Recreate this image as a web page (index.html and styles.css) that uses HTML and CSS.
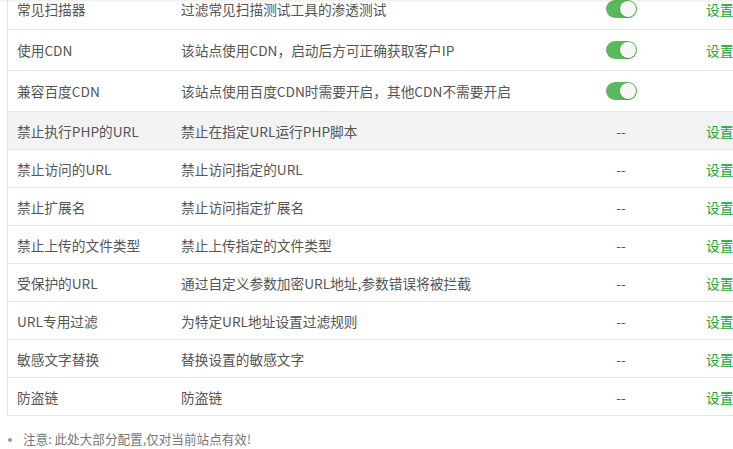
FILE: index.html
```
<!DOCTYPE html>
<html lang="zh-CN">
<head>
<meta charset="utf-8">
<link rel="stylesheet" href="styles.css">
</head>
<body>
<div class="topshade"></div>
<div class="page">
  <div class="table">
    <div class="row tall">
      <div class="c1">常见扫描器</div>
      <div class="c2">过滤常见扫描测试工具的渗透测试</div>
      <div class="c3"><span class="toggle"><span class="knob"></span></span></div>
      <div class="c4"><a class="set">设置</a></div>
    </div>
    <div class="row tall">
      <div class="c1">使用CDN</div>
      <div class="c2">该站点使用CDN，启动后方可正确获取客户IP</div>
      <div class="c3"><span class="toggle"><span class="knob"></span></span></div>
      <div class="c4"><a class="set">设置</a></div>
    </div>
    <div class="row tall">
      <div class="c1">兼容百度CDN</div>
      <div class="c2">该站点使用百度CDN时需要开启，其他CDN不需要开启</div>
      <div class="c3"><span class="toggle"><span class="knob"></span></span></div>
      <div class="c4"></div>
    </div>
    <div class="row hover">
      <div class="c1">禁止执行PHP的URL</div>
      <div class="c2">禁止在指定URL运行PHP脚本</div>
      <div class="c3">--</div>
      <div class="c4"><a class="set">设置</a></div>
    </div>
    <div class="row">
      <div class="c1">禁止访问的URL</div>
      <div class="c2">禁止访问指定的URL</div>
      <div class="c3">--</div>
      <div class="c4"><a class="set">设置</a></div>
    </div>
    <div class="row">
      <div class="c1">禁止扩展名</div>
      <div class="c2">禁止访问指定扩展名</div>
      <div class="c3">--</div>
      <div class="c4"><a class="set">设置</a></div>
    </div>
    <div class="row">
      <div class="c1">禁止上传的文件类型</div>
      <div class="c2">禁止上传指定的文件类型</div>
      <div class="c3">--</div>
      <div class="c4"><a class="set">设置</a></div>
    </div>
    <div class="row">
      <div class="c1">受保护的URL</div>
      <div class="c2">通过自定义参数加密URL地址,参数错误将被拦截</div>
      <div class="c3">--</div>
      <div class="c4"><a class="set">设置</a></div>
    </div>
    <div class="row">
      <div class="c1">URL专用过滤</div>
      <div class="c2">为特定URL地址设置过滤规则</div>
      <div class="c3">--</div>
      <div class="c4"><a class="set">设置</a></div>
    </div>
    <div class="row">
      <div class="c1">敏感文字替换</div>
      <div class="c2">替换设置的敏感文字</div>
      <div class="c3">--</div>
      <div class="c4"><a class="set">设置</a></div>
    </div>
    <div class="row">
      <div class="c1">防盗链</div>
      <div class="c2">防盗链</div>
      <div class="c3">--</div>
      <div class="c4"><a class="set">设置</a></div>
    </div>
  </div>
  <ul class="notes">
    <li>注意: 此处大部分配置,仅对当前站点有效!</li>
  </ul>
</div>
</body>
</html>
```
FILE: styles.css
```
html, body {
  margin: 0;
  padding: 0;
  background: #fff;
  overflow: hidden;
  width: 733px;
  height: 449px;
}
body {
  font-family: "Noto Sans CJK SC", "Liberation Sans", sans-serif;
  color: #555;
  position: relative;
}
.topshade {
  position: absolute;
  left: 0;
  top: 0;
  width: 100%;
  height: 3px;
  background: linear-gradient(to bottom, rgba(0,0,0,0.06), rgba(0,0,0,0));
  z-index: 2;
}
.page {
  padding-left: 7px;
  margin-top: -11px;
}
.table {
  width: 725px;
  overflow: hidden;
  border-left: 1px solid #e6e6e6;
  border-bottom: 1px solid #e6e6e6;
}
.row {
  display: grid;
  grid-template-columns: 164px 400px 98px 1fr;
  align-items: center;
  height: 37px;
  border-bottom: 1px solid #e6e6e6;
  font-size: 13.7px;
  overflow: hidden;
}
.row:last-child {
  border-bottom: none;
}
.row.tall {
  height: 40px;
}
.row.hover {
  background: #f3f3f3;
}
.c1, .c2 {
  padding-left: 9px;
  white-space: nowrap;
}
.c3 {
  display: flex;
  justify-content: center;
  color: #555;
}
.c4 {
  padding-left: 36px;
  white-space: nowrap;
  overflow: hidden;
}
.set {
  color: #20a53a;
  white-space: nowrap;
}
.toggle {
  display: inline-block;
  width: 31px;
  height: 18px;
  border-radius: 9px;
  background: #5cb85c;
  position: relative;
}
.knob {
  position: absolute;
  right: 1px;
  top: 1px;
  width: 16px;
  height: 16px;
  border-radius: 50%;
  background: #f8f8f8;
  box-shadow: 0 1px 2px rgba(0,0,0,0.25);
}
.notes {
  margin: 13px 0 0;
  padding-left: 16px;
  font-size: 12.6px;
  color: #777;
  list-style: disc;
}
.notes li::marker {
  color: #999;
  font-size: 11px;
}
```
